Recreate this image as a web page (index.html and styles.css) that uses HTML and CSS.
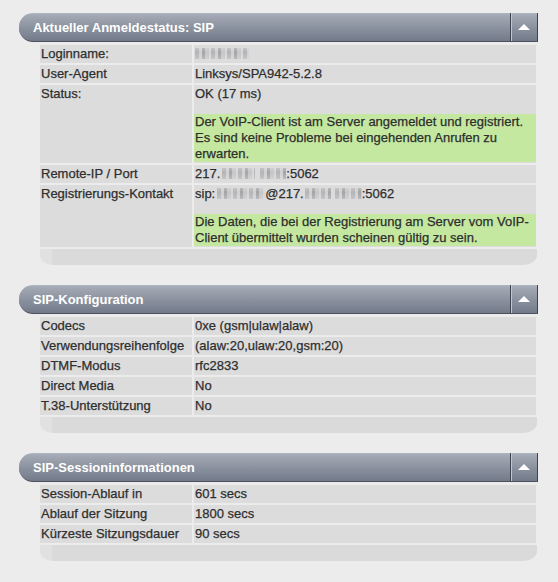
FILE: index.html
```html
<!DOCTYPE html>
<html lang="de">
<head>
<meta charset="utf-8">
<title>SIP Status</title>
<link rel="stylesheet" href="styles.css">
</head>
<body>
<section class="panel">
  <div class="panel-head">
    <span class="panel-title">Aktueller Anmeldestatus: SIP</span>
    <span class="toggle"><span class="tri"></span></span>
  </div>
  <table class="info">
    <tr><td class="label">Loginname:</td><td class="value"><span class="blur blur-login"></span></td></tr>
    <tr><td class="label">User-Agent</td><td class="value">Linksys/SPA942-5.2.8</td></tr>
    <tr><td class="label">Status:</td><td class="value">OK (17 ms)<div class="note">Der VoIP-Client ist am Server angemeldet und registriert. Es sind keine Probleme bei eingehenden Anrufen zu erwarten.</div></td></tr>
    <tr><td class="label">Remote-IP / Port</td><td class="value">217.<span class="blur blur-ip1"></span><span class="blur blur-ip2"></span>:5062</td></tr>
    <tr><td class="label">Registrierungs-Kontakt</td><td class="value">sip:<span class="blur blur-user"></span>@217.<span class="blur blur-ip3"></span><span class="blur blur-ip4"></span>:5062<div class="note">Die Daten, die bei der Registrierung am Server vom VoIP-Client übermittelt wurden scheinen gültig zu sein.</div></td></tr>
  </table>
  <div class="panel-foot"></div>
</section>

<section class="panel">
  <div class="panel-head">
    <span class="panel-title">SIP-Konfiguration</span>
    <span class="toggle"><span class="tri"></span></span>
  </div>
  <table class="info">
    <tr><td class="label">Codecs</td><td class="value">0xe (gsm|ulaw|alaw)</td></tr>
    <tr><td class="label">Verwendungsreihenfolge</td><td class="value">(alaw:20,ulaw:20,gsm:20)</td></tr>
    <tr><td class="label">DTMF-Modus</td><td class="value">rfc2833</td></tr>
    <tr><td class="label">Direct Media</td><td class="value">No</td></tr>
    <tr><td class="label">T.38-Unterstützung</td><td class="value">No</td></tr>
  </table>
  <div class="panel-foot"></div>
</section>

<section class="panel">
  <div class="panel-head">
    <span class="panel-title">SIP-Sessioninformationen</span>
    <span class="toggle"><span class="tri"></span></span>
  </div>
  <table class="info">
    <tr><td class="label">Session-Ablauf in</td><td class="value">601 secs</td></tr>
    <tr><td class="label">Ablauf der Sitzung</td><td class="value">1800 secs</td></tr>
    <tr><td class="label">Kürzeste Sitzungsdauer</td><td class="value">90 secs</td></tr>
  </table>
  <div class="panel-foot"></div>
</section>
</body>
</html>
```

FILE: styles.css
```css
html, body {
  margin: 0;
  background: #ececec;
}
body {
  padding: 13px 0 0 19px;
  font-family: "Liberation Sans", Arial, sans-serif;
  font-size: 13px;
  color: #2e2e2e;
}
.panel {
  width: 519px;
  margin-bottom: 20px;
}
.panel-head {
  display: flex;
  height: 28px;
  border-bottom: 1px solid #4a505c;
  border-radius: 14px 0 0 14px;
  background: linear-gradient(#b2b8c1 0, #a3aab5 2px, #8a919e 55%, #727a89 100%);
}
.panel-title {
  flex: 1;
  padding: 2px 0 0 14px;
  line-height: 26px;
  font-weight: bold;
  color: #fff;
}
.toggle {
  width: 28px;
  border-left: 1px solid #3e434d;
  border-right: 1px solid #3e434d;
  box-shadow: inset 1px 0 0 #c3c8cf;
  display: flex;
  justify-content: center;
  padding-top: 11px;
  box-sizing: border-box;
}
.tri {
  width: 0;
  height: 0;
  border-left: 6px solid transparent;
  border-right: 6px solid transparent;
  border-bottom: 6px solid #fff;
}
.info {
  margin: 1px 0 0 19px;
  width: 500px;
  table-layout: fixed;
  border-collapse: separate;
  border-spacing: 2px;
}
.info td {
  background: #dcdcdc;
  padding: 1px 0 1px 1px;
  line-height: 16px;
  vertical-align: top;
  font-size: 13px;
  -webkit-text-stroke: 0.25px #2e2e2e;
}
.info td.label {
  width: 151px;
}
.note {
  margin: 12px 0 0 -1px;
  padding-left: 1px;
  background: #c4e8a0;
}
.panel-foot {
  margin-left: 21px;
  width: 497px;
  height: 16px;
  background: linear-gradient(to right, #e1e1e1 0, #e1e1e1 12px, #dadada 12px);
  border-radius: 0 0 14px 12px / 0 0 10px 10px;
}
.blur {
  display: inline-block;
  height: 11px;
  vertical-align: -1px;
  background:
    linear-gradient(rgba(236,236,236,0.3), rgba(220,220,220,0) 40%, rgba(236,236,236,0.3)),
    repeating-linear-gradient(90deg, #b4b4b6 0 4px, #d0d0d2 4px 7px, #a4a4a7 7px 10px, #c6c6c8 10px 14px, #d6d6d8 14px 16px);
}
.blur-login { width: 54px; }
.blur-ip1 { width: 33px; margin-left: 2px; }
.blur-ip2 { width: 26px; margin-left: 5px; }
.blur-user { width: 48px; margin-left: 2px; }
.blur-ip3 { width: 26px; margin-left: 1px; }
.blur-ip4 { width: 27px; margin-left: 4px; }
```
